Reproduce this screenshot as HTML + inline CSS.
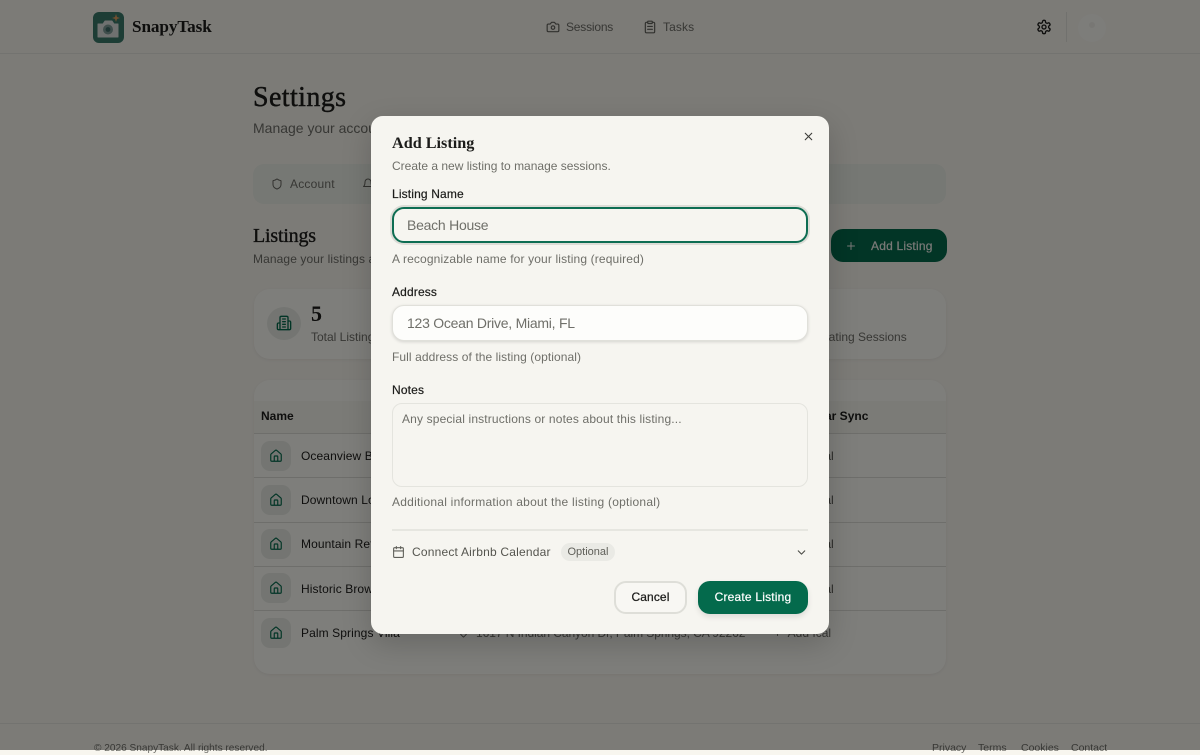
<!DOCTYPE html>
<html lang="en"><head><meta charset="utf-8"><title>SnapyTask Settings</title>
<style>
*{box-sizing:border-box}
html,body{margin:0;padding:0;width:1200px;height:750px;overflow:hidden;background:#f8f6ef;font-family:"Liberation Sans",sans-serif;color:#1c1c1a}
.a{position:absolute;white-space:nowrap}
.s{font-family:"Liberation Serif",serif}
.m{color:#6f6f69}
svg{position:absolute;fill:none;stroke-linecap:round;stroke-linejoin:round}
.rowline{position:absolute;left:254px;width:692px;height:1px;background:#dcdcd6}
.ib{position:absolute;left:261px;width:30px;height:30px;border-radius:9px;background:#e8ebe4}
.rn{position:absolute;left:301px;font-size:12px;white-space:nowrap;letter-spacing:.1px}
.ic{position:absolute;left:815px;font-size:12px;color:#55554f}
#ov{position:absolute;left:0;top:0;width:1200px;height:750px;background:rgba(0,0,0,.5)}
#modal{position:absolute;left:371px;top:116px;width:458px;height:518px;background:#f6f5f0;border-radius:12px;box-shadow:0 10px 30px rgba(0,0,0,.18)}
.l{font-size:12px;color:#1c1c1a;position:absolute;white-space:nowrap;letter-spacing:.15px;-webkit-text-stroke:.2px #1c1c1a}
.h{font-size:12px;color:#6f6f69;position:absolute;white-space:nowrap}
.f{font-size:10.5px;line-height:13px;top:742px}
</style></head><body>
<div class="a" style="left:0;top:0;width:1200px;height:54px;border-bottom:1px solid #e6e6e0"></div>
<svg style="left:93px;top:12px" width="31" height="31" viewBox="0 0 31 31"><rect width="31" height="31" rx="6" fill="#3a7a6b"/><path d="M5 12h5l2-3h7l2 3h4v13H5z" fill="#dfe3e0" stroke="#dfe3e0" stroke-width="1"/><circle cx="15" cy="17.500" r="5" fill="#7f9c98"/><circle cx="15" cy="17.500" r="2.400" fill="#3e6a66"/><path d="M23 2l1 3 3 1-3 1-1 3-1-3-3-1 3-1z" fill="#e0a060"/></svg>
<div class="a s" style="left:132px;top:16px;font-size:17.2px;font-weight:700;line-height:22px;letter-spacing:-.1px">SnapyTask</div>
<svg style="left:546px;top:20px" width="14" height="14" viewBox="0 0 24 24" stroke="#62625c" stroke-width="2"><path d="M14.5 4h-5L7 7H4a2 2 0 0 0-2 2v9a2 2 0 0 0 2 2h16a2 2 0 0 0 2-2V9a2 2 0 0 0-2-2h-3z"/><circle cx="12" cy="13" r="3"/></svg>
<div class="a m" style="left:566px;top:20px;font-size:12px;line-height:14px;letter-spacing:-.2px">Sessions</div>
<svg style="left:643px;top:20px" width="14" height="14" viewBox="0 0 24 24" stroke="#62625c" stroke-width="2"><rect x="8" y="2" width="8" height="4" rx="1"/><path d="M16 4h2a2 2 0 0 1 2 2v14a2 2 0 0 1-2 2H6a2 2 0 0 1-2-2V6a2 2 0 0 1 2-2h2M8 11h8M8 16h8"/></svg>
<div class="a m" style="left:663px;top:20px;font-size:12px;line-height:14px;letter-spacing:.1px">Tasks</div>
<svg style="left:1036px;top:19px" width="16" height="16" viewBox="0 0 24 24" stroke="#1c1c1a" stroke-width="2"><path d="M12.22 2h-.44a2 2 0 0 0-2 2v.18a2 2 0 0 1-1 1.73l-.43.25a2 2 0 0 1-2 0l-.15-.08a2 2 0 0 0-2.73.73l-.22.38a2 2 0 0 0 .73 2.73l.15.1a2 2 0 0 1 1 1.72v.51a2 2 0 0 1-1 1.74l-.15.09a2 2 0 0 0-.73 2.73l.22.38a2 2 0 0 0 2.73.73l.15-.08a2 2 0 0 1 2 0l.43.25a2 2 0 0 1 1 1.73V20a2 2 0 0 0 2 2h.44a2 2 0 0 0 2-2v-.18a2 2 0 0 1 1-1.73l.43-.25a2 2 0 0 1 2 0l.15.08a2 2 0 0 0 2.73-.73l.22-.39a2 2 0 0 0-.73-2.73l-.15-.08a2 2 0 0 1-1-1.74v-.5a2 2 0 0 1 1-1.74l.15-.09a2 2 0 0 0 .73-2.73l-.22-.38a2 2 0 0 0-2.73-.73l-.15.08a2 2 0 0 1-2 0l-.43-.25a2 2 0 0 1-1-1.73V4a2 2 0 0 0-2-2z"/><circle cx="12" cy="12" r="3"/></svg>
<div class="a" style="left:1066px;top:12px;width:1px;height:30px;background:#e2e2dc"></div>
<div class="a" style="left:1078px;top:14px;width:28px;height:28px;border-radius:50%;background:#fbfaf5"></div>
<div class="a" style="left:1089px;top:22px;width:6px;height:6px;border-radius:50%;background:#f0efe9"></div>

<div class="a s" style="left:253px;top:81px;font-size:28px;line-height:34px;letter-spacing:.4px;-webkit-text-stroke:.45px #1c1c1a">Settings</div>
<div class="a m" style="left:253px;top:120px;font-size:14px;line-height:16px">Manage your account</div>
<div class="a" style="left:253px;top:164px;width:693px;height:40px;border-radius:11px;background:#edf0e8"></div>
<svg style="left:271px;top:178px" width="12" height="12" viewBox="0 0 24 24" stroke="#62625c" stroke-width="2"><path d="M20 13c0 5-3.5 7.5-7.66 8.95a1 1 0 0 1-.67-.01C7.5 20.5 4 18 4 13V6a1 1 0 0 1 1-1c2 0 4.5-1.2 6.24-2.72a1.17 1.17 0 0 1 1.52 0C14.51 3.81 17 5 19 5a1 1 0 0 1 1 1z"/></svg>
<div class="a m" style="left:290px;top:177px;font-size:12px;line-height:14px;letter-spacing:.2px">Account</div>
<svg style="left:362px;top:178px" width="12" height="12" viewBox="0 0 24 24" stroke="#62625c" stroke-width="2"><path d="M6 8a6 6 0 0 1 12 0c0 7 3 9 3 9H3s3-2 3-9"/></svg>

<div class="a s" style="left:253px;top:224px;font-size:20px;line-height:24px;letter-spacing:-.2px;-webkit-text-stroke:.35px #1c1c1a">Listings</div>
<div class="a m" style="left:253px;top:252px;font-size:12px;line-height:14px;letter-spacing:.1px">Manage your listings and</div>
<div class="a" style="left:831px;top:229px;width:116px;height:33px;border-radius:12px;background:#046a4c"></div>
<svg style="left:845px;top:240px" width="12" height="12" viewBox="0 0 24 24" stroke="#f3f3ee" stroke-width="2"><path d="M5 12h14M12 5v14"/></svg>
<div class="a" style="left:871px;top:239px;font-size:12px;line-height:14px;color:#f3f3ee;letter-spacing:.2px;-webkit-text-stroke:.2px #f3f3ee">Add Listing</div>

<div class="a" style="left:254px;top:289px;width:692px;height:70px;border-radius:16px;background:#fdfcf7;box-shadow:0 1px 3px rgba(0,0,0,.06)"></div>
<div class="a" style="left:267px;top:307px;width:34px;height:33px;border-radius:50%;background:#e8ebe4"></div>
<svg style="left:276px;top:315px" width="16" height="16" viewBox="0 0 24 24" stroke="#046a4c" stroke-width="2"><path d="M6 22V4a2 2 0 0 1 2-2h8a2 2 0 0 1 2 2v18zM6 12H4a2 2 0 0 0-2 2v6a2 2 0 0 0 2 2h2M18 9h2a2 2 0 0 1 2 2v9a2 2 0 0 1-2 2h-2M10 6h4M10 10h4M10 14h4M10 18h4"/></svg>
<div class="a" style="left:311px;top:301px;font-size:22px;line-height:26px;font-weight:700;font-family:'Liberation Serif',serif">5</div>
<div class="a m" style="left:311px;top:330px;font-size:12px;line-height:14px">Total Listings</div>
<div class="a m" style="left:798px;top:330px;font-size:12px;line-height:14px">Integrating Sessions</div>

<div class="a" style="left:254px;top:380px;width:692px;height:294px;border-radius:16px;background:#fdfcf7;box-shadow:0 1px 3px rgba(0,0,0,.06);overflow:hidden"><div style="position:absolute;left:0;top:21px;width:692px;height:32px;background:#f7f6ef"></div></div>
<div class="a" style="left:261px;top:409px;font-size:12px;line-height:14px;font-weight:700">Name</div>
<div class="a" style="left:785px;top:409px;font-size:12px;line-height:14px;font-weight:700">Calendar Sync</div>
<div class="rowline" style="top:433px"></div><div class="rowline" style="top:477px"></div><div class="rowline" style="top:522px"></div><div class="rowline" style="top:566px"></div><div class="rowline" style="top:610px"></div>

<div class="ib" style="top:441px"></div><div class="ib" style="top:485px"></div><div class="ib" style="top:529px"></div><div class="ib" style="top:573px"></div><div class="ib" style="top:618px"></div>
<svg style="left:269px;top:449px" width="14" height="14" viewBox="0 0 24 24" stroke="#046a4c" stroke-width="2"><path d="M15 21v-8a1 1 0 0 0-1-1h-4a1 1 0 0 0-1 1v8M3 10a2 2 0 0 1 .71-1.53l7-6a2 2 0 0 1 2.58 0l7 6A2 2 0 0 1 21 10v9a2 2 0 0 1-2 2H5a2 2 0 0 1-2-2z"/></svg>
<svg style="left:269px;top:493px" width="14" height="14" viewBox="0 0 24 24" stroke="#046a4c" stroke-width="2"><path d="M15 21v-8a1 1 0 0 0-1-1h-4a1 1 0 0 0-1 1v8M3 10a2 2 0 0 1 .71-1.53l7-6a2 2 0 0 1 2.58 0l7 6A2 2 0 0 1 21 10v9a2 2 0 0 1-2 2H5a2 2 0 0 1-2-2z"/></svg>
<svg style="left:269px;top:537px" width="14" height="14" viewBox="0 0 24 24" stroke="#046a4c" stroke-width="2"><path d="M15 21v-8a1 1 0 0 0-1-1h-4a1 1 0 0 0-1 1v8M3 10a2 2 0 0 1 .71-1.53l7-6a2 2 0 0 1 2.58 0l7 6A2 2 0 0 1 21 10v9a2 2 0 0 1-2 2H5a2 2 0 0 1-2-2z"/></svg>
<svg style="left:269px;top:581px" width="14" height="14" viewBox="0 0 24 24" stroke="#046a4c" stroke-width="2"><path d="M15 21v-8a1 1 0 0 0-1-1h-4a1 1 0 0 0-1 1v8M3 10a2 2 0 0 1 .71-1.53l7-6a2 2 0 0 1 2.58 0l7 6A2 2 0 0 1 21 10v9a2 2 0 0 1-2 2H5a2 2 0 0 1-2-2z"/></svg>
<svg style="left:269px;top:626px" width="14" height="14" viewBox="0 0 24 24" stroke="#046a4c" stroke-width="2"><path d="M15 21v-8a1 1 0 0 0-1-1h-4a1 1 0 0 0-1 1v8M3 10a2 2 0 0 1 .71-1.53l7-6a2 2 0 0 1 2.58 0l7 6A2 2 0 0 1 21 10v9a2 2 0 0 1-2 2H5a2 2 0 0 1-2-2z"/></svg>
<div class="rn" style="top:449px">Oceanview Beach</div>
<div class="rn" style="top:493px">Downtown Loft</div>
<div class="rn" style="top:537px">Mountain Retreat</div>
<div class="rn" style="top:582px">Historic Brownstone</div>
<div class="rn" style="top:626px">Palm Springs Villa</div>
<div class="ic" style="top:449px">Ical</div><div class="ic" style="top:493px">Ical</div><div class="ic" style="top:537px">Ical</div><div class="ic" style="top:582px">Ical</div>
<svg style="left:458px;top:627px" width="11" height="11" viewBox="0 0 24 24" stroke="#62625c" stroke-width="2"><path d="M20 10c0 5-5.5 10-8 12-2.5-2-8-7-8-12a8 8 0 0 1 16 0z"/><circle cx="12" cy="10" r="3"/></svg>
<div class="a m" style="left:476px;top:626px;font-size:12px;letter-spacing:-.06px">1617 N Indian Canyon Dr, Palm Springs, CA 92262</div>
<div class="a m" style="left:774px;top:626px;font-size:12px">+ &nbsp;Add Ical</div>

<div class="a" style="left:0;top:723px;width:1200px;height:1px;background:#e6e6e0"></div>
<div class="a m f" style="left:94px;font-size:10.1px">© 2026 SnapyTask. All rights reserved.</div>
<div class="a m f" style="left:932px">Privacy</div>
<div class="a m f" style="left:978px">Terms</div>
<div class="a m f" style="left:1021px">Cookies</div>
<div class="a m f" style="left:1071px">Contact</div>

<div id="ov"></div>

<div id="modal">
<div class="a s" style="left:21px;top:17px;font-size:16.2px;line-height:21px;font-weight:700;letter-spacing:0">Add Listing</div>
<svg style="left:431px;top:14px" width="13" height="13" viewBox="0 0 24 24" stroke="#3c3c38" stroke-width="2"><path d="M18 6 6 18M6 6l12 12"/></svg>
<div class="h" style="left:21px;top:43px">Create a new listing to manage sessions.</div>
<div class="l" style="left:21px;top:71px">Listing Name</div>
<div class="a" style="left:21px;top:91px;width:416px;height:36px;border:2px solid #0d6d52;border-radius:12px;background:#f6f5f0;box-shadow:0 0 0 2px #dcdcd6"></div>
<div class="a" style="left:36px;top:101px;font-size:14px;line-height:16px;color:#6f6f69;letter-spacing:-.25px">Beach House</div>
<div class="h" style="left:21px;top:136px;letter-spacing:.14px">A recognizable name for your listing (required)</div>
<div class="l" style="left:21px;top:169px">Address</div>
<div class="a" style="left:21px;top:189px;width:416px;height:36px;border:1px solid #e0e0da;border-radius:12px;background:#fdfdfb;box-shadow:0 1px 3px rgba(0,0,0,.14)"></div>
<div class="a" style="left:36px;top:199px;font-size:14px;line-height:16px;color:#6f6f69;letter-spacing:-.25px">123 Ocean Drive, Miami, FL</div>
<div class="h" style="left:21px;top:234px;letter-spacing:.08px">Full address of the listing (optional)</div>
<div class="l" style="left:21px;top:267px">Notes</div>
<div class="a" style="left:21px;top:287px;width:416px;height:84px;border:1px solid #e4e4de;border-radius:10px;background:#f6f5f0"></div>
<div class="h" style="left:31px;top:296px;letter-spacing:.15px">Any special instructions or notes about this listing...</div>
<div class="h" style="left:21px;top:379px;letter-spacing:.24px">Additional information about the listing (optional)</div>
<div class="a" style="left:21px;top:413px;width:416px;height:2px;background:#e6e6e0"></div>
<svg style="left:21px;top:429px" width="13" height="14" viewBox="0 0 24 24" stroke="#5f5f59" stroke-width="2"><path d="M8 2v4M16 2v4"/><rect x="3" y="4" width="18" height="18" rx="2"/><path d="M3 10h18"/></svg>
<div class="h" style="left:41px;top:429px;color:#55554f;letter-spacing:.2px">Connect Airbnb Calendar</div>
<div class="a" style="left:190px;top:427px;width:54px;height:18px;border-radius:9px;background:#eaeae5;font-size:11px;line-height:18px;text-align:center;color:#5f5f59">Optional</div>
<svg style="left:424px;top:430px" width="13" height="13" viewBox="0 0 24 24" stroke="#4c4c47" stroke-width="2"><path d="m6 9 6 6 6-6"/></svg>
<div class="a" style="left:243px;top:465px;width:73px;height:33px;border:2px solid #deded8;border-radius:12px;background:#f8f7f3;font-size:12px;line-height:29px;text-align:center;-webkit-text-stroke:.25px #1c1c1a;letter-spacing:.1px">Cancel</div>
<div class="a" style="left:327px;top:465px;width:110px;height:33px;border-radius:12px;background:#046a4c;color:#fff;font-size:12px;line-height:33px;text-align:center;-webkit-text-stroke:.2px #fff;letter-spacing:.2px;box-shadow:0 3px 6px rgba(0,0,0,.1)">Create Listing</div>
</div>
</body></html>
